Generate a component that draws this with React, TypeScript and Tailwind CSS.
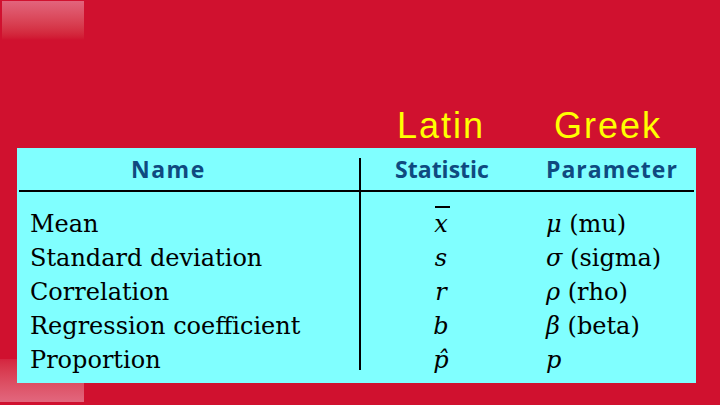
import React from "react";

const serif = { fontFamily: '"DejaVu Serif", "Liberation Serif", serif' };

function Bar() {
  return <span className="absolute left-[1px] top-[-8px] h-[1.5px] w-[15px] bg-black" />;
}

const rows: { name: string; stat: React.ReactNode; greek: string; word: string }[] = [
  { name: "Mean", stat: <span className="relative inline-block">x<Bar /></span>, greek: "μ", word: "(mu)" },
  { name: "Standard deviation", stat: "s", greek: "σ", word: "(sigma)" },
  { name: "Correlation", stat: "r", greek: "ρ", word: "(rho)" },
  { name: "Regression coefficient", stat: "b", greek: "β", word: "(beta)" },
  { name: "Proportion", stat: "p\u0302", greek: "p", word: "" },
];

export default function App() {
  return (
    <div className="relative w-[720px] h-[405px] overflow-hidden bg-[#d0112f]">
      <div className="absolute left-[2px] top-[1px] w-[82px] h-[39px] bg-gradient-to-b from-[#e2647c] to-[#d0112f]" />
      <div className="absolute left-0 top-[359px] w-[84px] h-[43px] bg-gradient-to-b from-[#d4243f] to-[#e2677e]" />

      <div className="relative flex flex-col pt-[108px]">
        <div
          className="flex h-[36px] text-[36px] leading-[36px] tracking-[2px] text-[#ffff00]"
          style={{ fontFamily: '"Liberation Sans", Arial, sans-serif' }}
        >
          <span className="ml-[397px]">Latin</span>
          <span className="ml-[69px]">Greek</span>
        </div>

        <div className="ml-[17px] mt-[4px] w-[679px] h-[235px] bg-[#80ffff] px-[2px] pt-[10px] flex flex-col">
          <div
            className="flex h-[34px] border-b-2 border-black text-[23px] leading-[22px] font-bold text-[#0f4a80]"
            style={{ fontFamily: '"Open Sans", sans-serif' }}
          >
            <div className="w-[342px] shrink-0 border-r-2 border-black pl-[112px] tracking-[1.5px]">Name</div>
            <div className="w-[162px] shrink-0 text-center">Statistic</div>
            <div className="pl-[23px] tracking-[1px]">Parameter</div>
          </div>
          <div className="flex text-[24px] leading-[20px] text-black" style={serif}>
            <div className="w-[342px] shrink-0 border-r-2 border-black pl-[11px] pt-[22px] h-[178px] flex flex-col gap-[14px]">
              {rows.map((r) => (
                <div key={r.name} className="whitespace-nowrap">{r.name}</div>
              ))}
            </div>
            <div className="w-[160px] shrink-0 pt-[22px] flex flex-col gap-[14px] items-center italic">
              {rows.map((r) => (
                <div key={r.name}>{r.stat}</div>
              ))}
            </div>
            <div className="pl-[25px] pt-[22px] flex flex-col gap-[14px]">
              {rows.map((r) => (
                <div key={r.name} className="whitespace-nowrap">
                  <span className="italic">{r.greek}</span>
                  {r.word && <span> {r.word}</span>}
                </div>
              ))}
            </div>
          </div>
        </div>
      </div>
    </div>
  );
}
